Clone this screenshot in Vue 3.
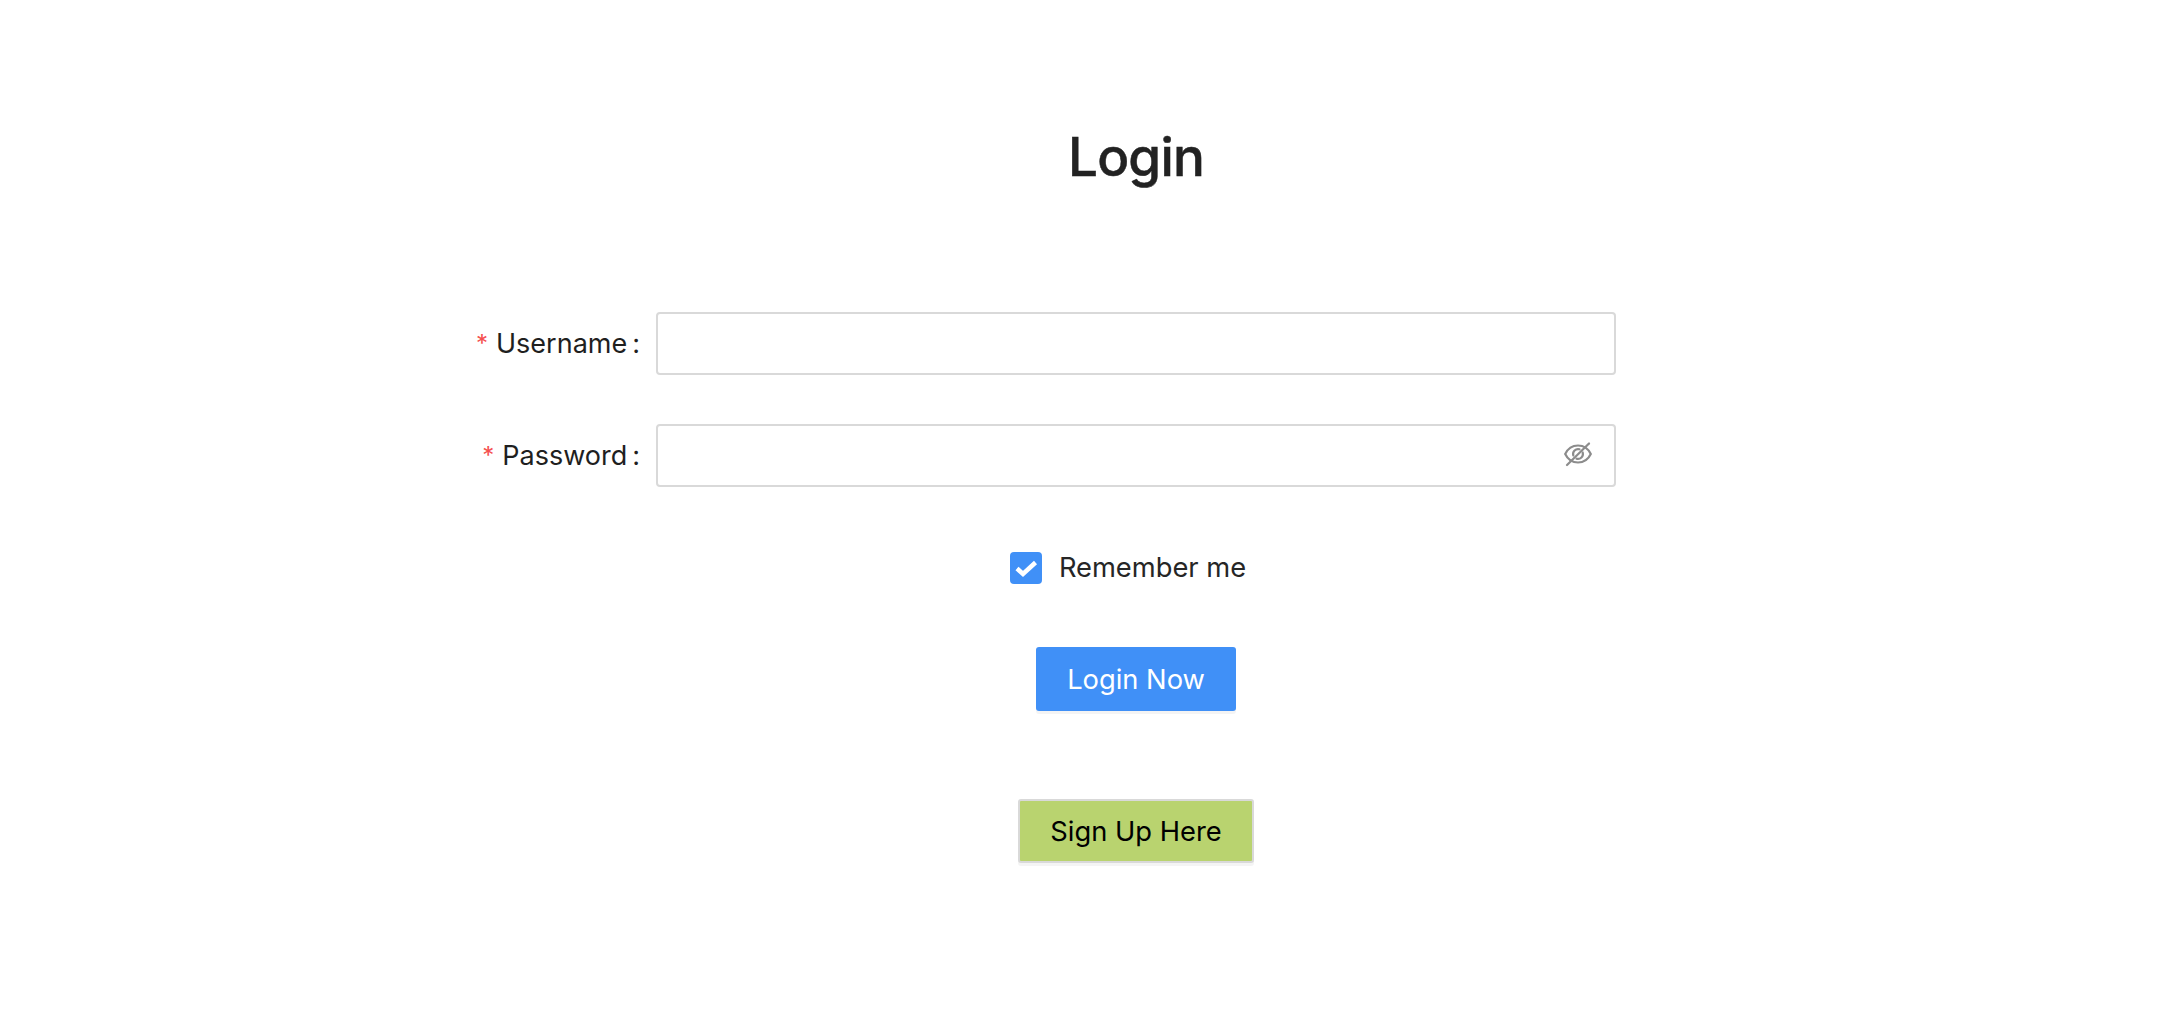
<script setup>
import { ref } from 'vue'

const username = ref('')
const password = ref('')
const remember = ref(true)
</script>

<template>
  <div class="page">
    <form class="login-form" @submit.prevent>
      <h1 class="title">Login</h1>

      <label class="field-label" for="username"><span class="required">*</span>Username<span class="colon">:</span></label>
      <div class="input-box">
        <input id="username" v-model="username" type="text" class="input" />
      </div>

      <label class="field-label" for="password"><span class="required">*</span>Password<span class="colon">:</span></label>
      <div class="input-box">
        <input id="password" v-model="password" type="password" class="input" />
        <svg class="eye" viewBox="0 0 28 24" fill="none" stroke="#8c8c8c" stroke-width="2.200" stroke-linecap="round" aria-hidden="true">
          <path d="M1.200 12C4 6.200 8.500 3.500 14 3.500S24 6.200 26.800 12C24 17.800 19.500 20.500 14 20.500S4 17.800 1.200 12Z" />
          <path d="M9.300 13.500A5 5 0 0 1 15.500 7.300M18.700 10.500A5 5 0 0 1 12.500 16.700" />
          <path d="M25 1.500L3 23" />
        </svg>
      </div>

      <label class="remember">
        <span class="check">
          <input v-model="remember" type="checkbox" class="check-input" />
          <svg viewBox="0 0 32 32" class="check-mark" fill="none" stroke="#fff" stroke-width="4.500" aria-hidden="true">
            <path d="M7 16.500L13 22L25.500 10.500" />
          </svg>
        </span>
        <span>Remember me</span>
      </label>

      <button type="submit" class="btn-login">Login Now</button>
      <button type="button" class="btn-signup">Sign Up Here</button>
    </form>
  </div>
</template>

<style>
html, body {
  margin: 0;
  background: #fff;
}
</style>

<style scoped>
.page {
  min-height: 1026px;
  box-sizing: border-box;
  padding-top: 119px;
  font-family: Inter, "Liberation Sans", sans-serif;
  color: #1f1f1f;
}

.login-form {
  display: grid;
  grid-template-columns: 640px 960px;
  column-gap: 16px;
  align-items: center;
}

.title {
  grid-column: 2;
  margin: 0 0 117px;
  text-align: center;
  font-size: 53px;
  line-height: 76px;
  font-weight: 500;
  letter-spacing: -0.8px;
  -webkit-text-stroke: 0.5px #222;
  color: #222;
}

.field-label {
  grid-column: 1;
  display: flex;
  justify-content: flex-end;
  align-items: center;
  font-size: 27px;
  margin-bottom: 49px;
}

.required {
  font-size: 24px;
  color: #f5504f;
  margin-right: 8px;
}

.colon {
  margin-left: 5px;
}

.input-box {
  grid-column: 2;
  position: relative;
  height: 63px;
  margin-bottom: 49px;
}

.input {
  display: block;
  width: 100%;
  height: 100%;
  box-sizing: border-box;
  border: 2px solid #d9d9d9;
  border-radius: 4px;
  background: #fff;
  outline: none;
  padding: 0 60px 0 16px;
  font: inherit;
  font-size: 26px;
}

.eye {
  position: absolute;
  right: 24px;
  top: 17px;
  width: 28px;
  height: 26px;
}

.remember {
  grid-column: 2;
  justify-self: center;
  display: flex;
  align-items: center;
  gap: 17px;
  font-size: 27.3px;
  color: #262626;
  margin: 15px 16px 63px 0;
}

.check {
  position: relative;
  display: block;
  width: 32px;
  height: 32px;
  border-radius: 4px;
  background: #4090f7;
}

.check-input {
  position: absolute;
  inset: 0;
  margin: 0;
  opacity: 0;
}

.check-mark {
  display: block;
  width: 32px;
  height: 32px;
}

.btn-login {
  grid-column: 2;
  justify-self: center;
  width: 200px;
  height: 64px;
  border: none;
  border-radius: 3px;
  background: #4090f7;
  color: #fff;
  font: inherit;
  font-size: 27.3px;
  box-shadow: 0 3px 0 rgba(0, 0, 0, 0.045);
  margin-bottom: 88px;
}

.btn-signup {
  grid-column: 2;
  justify-self: center;
  width: 236px;
  height: 64px;
  box-sizing: border-box;
  border: 2px solid #d9d9d9;
  border-radius: 3px;
  background: #b9d36f;
  color: #000;
  font: inherit;
  font-size: 27.3px;
  box-shadow: 0 3px 0 rgba(0, 0, 0, 0.045);
}
</style>
